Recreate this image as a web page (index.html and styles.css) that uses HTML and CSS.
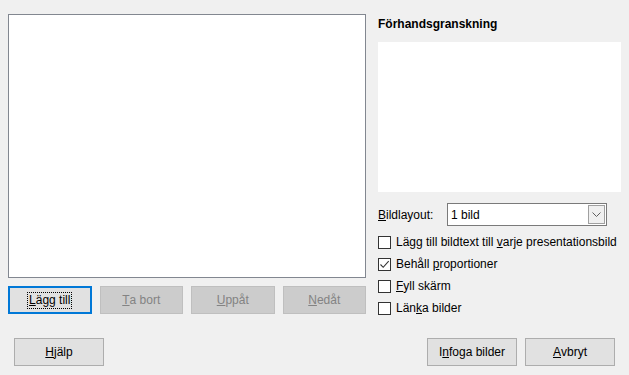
FILE: index.html
```html
<!DOCTYPE html>
<html lang="sv">
<head>
<meta charset="utf-8">
<title>Infoga bilder</title>
<link rel="stylesheet" href="styles.css">
</head>
<body>
<div class="dialog">
  <div class="main">
    <div class="left">
      <div class="listbox"></div>
      <div class="btnrow">
        <button class="btn default"><span class="focus"><u>L</u>ägg till</span></button>
        <button class="btn disabled"><u>T</u>a bort</button>
        <button class="btn disabled"><u>U</u>ppåt</button>
        <button class="btn disabled"><u>N</u>edåt</button>
      </div>
    </div>
    <div class="right">
      <div class="heading">Förhandsgranskning</div>
      <div class="preview"></div>
      <div class="layoutrow">
        <span class="label"><u>B</u>ildlayout:</span>
        <div class="combo">
          <span class="combo-value">1 bild</span>
          <span class="combo-btn">
            <svg width="9" height="5" viewBox="0 0 9 5"><path d="M0.5 0.5 L4.5 4.5 L8.5 0.5" fill="none" stroke="#606060" stroke-width="1"/></svg>
          </span>
        </div>
      </div>
      <div class="checks">
        <div class="check"><span class="box"></span><span>Lägg till bildtext till <u>v</u>arje presentationsbild</span></div>
        <div class="check"><span class="box"><svg width="11" height="11" viewBox="0 0 11 11"><path d="M1.5 5.5 L4.2 8.3 L9.7 2.2" fill="none" stroke="#333" stroke-width="1.1"/></svg></span><span>Behåll <u>p</u>roportioner</span></div>
        <div class="check"><span class="box"></span><span><u>F</u>yll skärm</span></div>
        <div class="check"><span class="box"></span><span>Län<u>k</u>a bilder</span></div>
      </div>
    </div>
  </div>
  <div class="footer">
    <button class="btn wide"><u>H</u>jälp</button>
    <div class="spacer"></div>
    <button class="btn wide">I<u>n</u>foga bilder</button>
    <button class="btn wide"><u>A</u>vbryt</button>
  </div>
</div>
</body>
</html>
```
FILE: styles.css
```css
html, body {
  margin: 0;
  padding: 0;
  background: #f0f0f0;
}
body {
  font-family: "Liberation Sans", "Noto Sans", Arial, sans-serif;
  font-size: 12px;
  color: #000;
}
.dialog {
  width: 629px;
  height: 375px;
  box-sizing: border-box;
  display: flex;
  flex-direction: column;
}
.main {
  display: flex;
  padding: 14px 0 0 8px;
  gap: 12px;
}
.left {
  width: 358px;
  display: flex;
  flex-direction: column;
}
.listbox {
  height: 264px;
  background: #fff;
  border: 1px solid #828790;
  box-sizing: border-box;
}
.btnrow {
  display: grid;
  grid-template-columns: repeat(4, 1fr);
  gap: 8px;
  margin-top: 8px;
}
.btn {
  font-family: inherit;
  font-size: 12px;
  color: #000;
  background: #e1e1e1;
  border: 1px solid #adadad;
  height: 28px;
  padding: 0;
  margin: 0;
  display: flex;
  align-items: center;
  justify-content: center;
  box-sizing: border-box;
}
.btn.default {
  border: 2px solid #0078d7;
}
.btn.default .focus {
  outline: 1px dotted #000;
  padding: 0 1px;
  line-height: 15px;
}
.btn.disabled {
  background: #cccccc;
  border-color: #bfbfbf;
  color: #838383;
}
.right {
  width: 243px;
  display: flex;
  flex-direction: column;
}
.heading {
  font-weight: bold;
  line-height: 20px;
  height: 20px;
  margin-bottom: 8px;
}
.preview {
  height: 150px;
  background: #fff;
}
.layoutrow {
  display: flex;
  align-items: center;
  margin-top: 11px;
  height: 23px;
}
.label {
  width: 69px;
}
.combo {
  width: 160px;
  height: 23px;
  box-sizing: border-box;
  border: 1px solid #7a7a7a;
  background: #fff;
  display: flex;
  align-items: center;
}
.combo-value {
  flex: 1;
  padding-left: 3px;
}
.combo-btn {
  width: 17px;
  height: 19px;
  margin-right: 1px;
  box-sizing: border-box;
  border: 1px solid #a0a0a0;
  background: #f0f0f0;
  display: flex;
  align-items: center;
  justify-content: center;
}
.checks {
  margin-top: 5px;
  display: flex;
  flex-direction: column;
}
.check {
  height: 22px;
  display: flex;
  align-items: center;
  white-space: nowrap;
}
.box {
  width: 13px;
  height: 13px;
  box-sizing: border-box;
  border: 1px solid #333;
  background: #fff;
  margin-right: 5px;
  display: flex;
  align-items: center;
  justify-content: center;
}
.footer {
  display: flex;
  padding: 0 14px;
  margin-top: 19px;
  gap: 8px;
}
.btn.wide {
  width: 90px;
}
.spacer {
  flex: 1;
}
```
